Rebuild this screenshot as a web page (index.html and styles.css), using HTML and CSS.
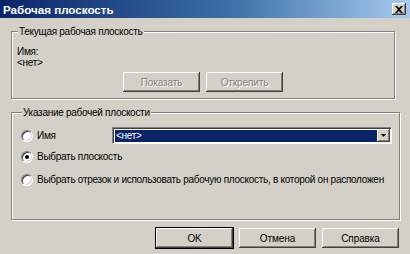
FILE: index.html
```html
<!DOCTYPE html>
<html lang="ru">
<head>
    <meta charset="utf-8">
    <title>Рабочая плоскость</title>
    <link rel="stylesheet" href="styles.css">
</head>
<body>
    <div class="window">
        <div class="titlebar">
            <span class="title">Рабочая плоскость</span>
            <span class="close-btn" aria-label="Закрыть">
                <svg width="8" height="7" viewBox="0 0 8 7" aria-hidden="true">
                    <path d="M0 0h2l2 2 2-2h2L5 3.5 8 7H6L4 5 2 7H0l3-3.5z" fill="#000"/>
                </svg>
            </span>
        </div>

        <fieldset class="group group-current">
            <legend>Текущая рабочая плоскость</legend>
            <div class="line">Имя:</div>
            <div class="line">&lt;нет&gt;</div>
            <div class="group-actions">
                <button class="btn" disabled>Показать</button>
                <button class="btn" disabled>Открепить</button>
            </div>
        </fieldset>

        <fieldset class="group group-select">
            <legend>Указание рабочей плоскости</legend>
            <div class="option option-name">
                <label class="radio-label"><span class="radio"></span>Имя</label>
                <div class="combo">
                    <span class="combo-value">&lt;нет&gt;</span>
                    <span class="combo-arrow">
                        <svg width="5" height="3" viewBox="0 0 5 3" aria-hidden="true"><path d="M0 0h5L2.5 3z" fill="#000"/></svg>
                    </span>
                </div>
            </div>
            <div class="option">
                <label class="radio-label"><span class="radio checked"></span>Выбрать плоскость</label>
            </div>
            <div class="option">
                <label class="radio-label"><span class="radio"></span>Выбрать отрезок и использовать рабочую плоскость, в которой он расположен</label>
            </div>
        </fieldset>

        <div class="dialog-buttons">
            <button class="btn btn-default">OK</button>
            <button class="btn">Отмена</button>
            <button class="btn">Справка</button>
        </div>
    </div>
</body>
</html>
```

FILE: styles.css
```css
body {
    margin: 0;
    background: #d4d0c8;
    color: #000;
    font-family: "Liberation Sans", Arial, sans-serif;
    font-size: 10px;
    letter-spacing: -0.28px;
}
.window {
    width: 410px;
    height: 254px;
    background: #d4d0c8;
    overflow: hidden;
}
.titlebar {
    height: 18px;
    display: flex;
    align-items: center;
    justify-content: space-between;
    padding: 0 4px 0 3px;
    background: linear-gradient(90deg, #0a246a, #3a6ea5 55%, #a6caf0);
}
.title {
    color: #fff;
    font-weight: bold;
    font-size: 11.6px;
    letter-spacing: 0;
}
.close-btn {
    width: 14px;
    height: 12px;
    display: flex;
    align-items: center;
    justify-content: center;
    background: #d4d0c8;
    box-shadow: inset -1px -1px 0 #404040, inset 1px 1px 0 #fff, inset -2px -2px 0 #808080;
}
.group {
    margin: 0;
    padding: 0 5px;
    min-width: 0;
    border: 1px solid #808080;
    box-shadow: 1px 1px 0 #fff, inset 1px 1px 0 #fff;
}
.group legend {
    padding: 0 1px;
    margin-left: 1px;
    line-height: 13px;
    background: #d4d0c8;
}
.group-current {
    margin: 7px 15px 0 11px;
    padding-top: 8px;
    padding-bottom: 6px;
}
.line {
    line-height: 11px;
    height: 11px;
}
.group-actions {
    display: flex;
    gap: 6px;
    margin-top: 4px;
    padding-left: 106px;
}
.btn {
    width: 77px;
    height: 20px;
    padding: 0;
    font-family: inherit;
    font-size: 10px;
    letter-spacing: -0.1px;
    color: #000;
    background: #d4d0c8;
    border: none;
    border-radius: 0;
    box-shadow: inset -1px -1px 0 #404040, inset 1px 1px 0 #fff, inset -2px -2px 0 #808080;
}
.btn:disabled {
    color: #808080;
    text-shadow: 1px 1px 0 #fff;
}
.btn-default {
    box-shadow: 0 0 0 1px #000, inset -1px -1px 0 #404040, inset 1px 1px 0 #fff, inset -2px -2px 0 #808080;
}
.group-select {
    margin: 7px 10px 0 11px;
    padding: 8px 9px 25px 9px;
}
.option {
    display: flex;
    align-items: center;
    height: 17px;
    margin-bottom: 6px;
}
.option-name {
    justify-content: space-between;
    margin-bottom: 4px;
}
.radio-label {
    display: flex;
    align-items: center;
    gap: 4px;
    white-space: nowrap;
}
.radio {
    width: 12px;
    height: 12px;
    box-sizing: border-box;
    border-radius: 50%;
    background: #fff;
    border: 1px solid;
    border-color: #808080 #fff #fff #808080;
    box-shadow: inset 1px 1px 0 #404040, inset -1px -1px 0 #d4d0c8;
    display: flex;
    align-items: center;
    justify-content: center;
}
.radio.checked::after {
    content: "";
    width: 4px;
    height: 4px;
    border-radius: 50%;
    background: #000;
}
.combo {
    width: 280px;
    height: 17px;
    box-sizing: border-box;
    display: flex;
    background: #fff;
    border: 1px solid;
    border-color: #808080 #fff #fff #808080;
    box-shadow: inset 1px 1px 0 #404040;
    padding: 2px 1px 1px 2px;
    margin-right: -2px;
}
.combo-value {
    flex: 1;
    background: #0a246a;
    color: #fff;
    line-height: 11px;
    padding-left: 1px;
}
.combo-arrow {
    width: 13px;
    display: flex;
    align-items: center;
    justify-content: center;
    margin-top: -1px;
    background: #d4d0c8;
    box-shadow: inset -1px -1px 0 #404040, inset 1px 1px 0 #fff, inset -2px -2px 0 #808080;
}
.dialog-buttons {
    display: flex;
    justify-content: flex-end;
    gap: 6px;
    margin: 8px 11px 0 0;
}
```
